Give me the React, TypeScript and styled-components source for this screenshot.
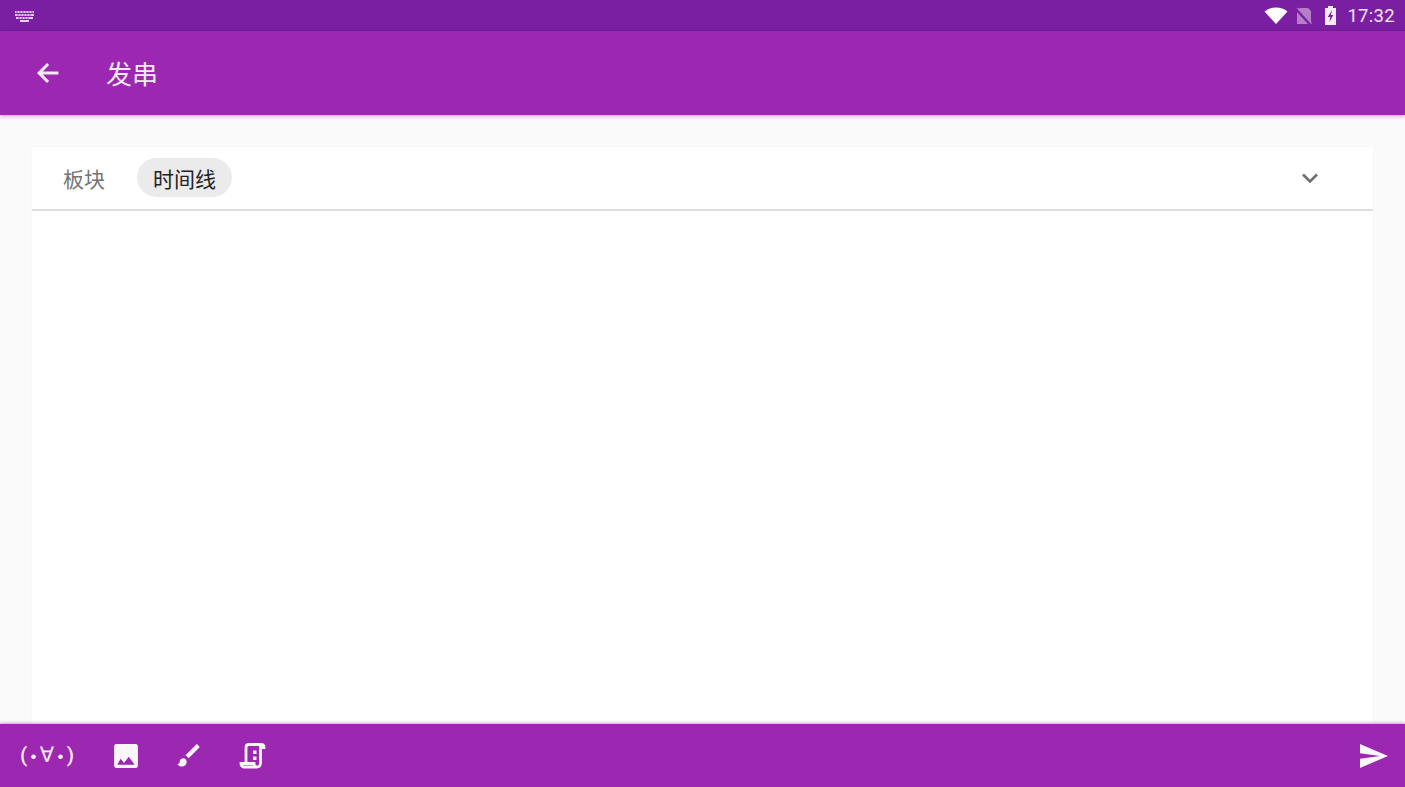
import React from "react";
import styled, { createGlobalStyle } from "styled-components";

const GlobalStyle = createGlobalStyle`
  html, body {
    margin: 0;
    padding: 0;
    background: #fafafa;
  }
  #root {
    height: 787px;
  }
  * {
    box-sizing: border-box;
  }
`;

const Page = styled.div`
  width: 1405px;
  height: 787px;
  display: flex;
  flex-direction: column;
  overflow: hidden;
  background: #fafafa;
  font-family: Roboto, "Noto Sans CJK SC", sans-serif;
`;

const StatusBar = styled.div`
  height: 31px;
  flex: none;
  display: flex;
  align-items: center;
  justify-content: space-between;
  padding: 0 10px 0 15px;
  background: #7b1fa2;
`;

const StatusIcons = styled.div`
  display: flex;
  align-items: center;
`;

const Clock = styled.span`
  margin-left: 10px;
  font-size: 18.5px;
  color: #f3e5f5;
  letter-spacing: 0.3px;
`;

const AppBar = styled.header`
  height: 84px;
  flex: none;
  display: flex;
  align-items: center;
  padding: 0 0 0 36px;
  background: #9c27b0;
  box-shadow: 0 1px 4px rgba(0, 0, 0, 0.32);
  position: relative;
  z-index: 1;
`;

const Title = styled.h1`
  margin: 0 0 2px 46px;
  font-size: 26px;
  font-weight: 400;
  color: #f6e9f8;
  font-family: "Noto Sans CJK SC", sans-serif;
`;

const Content = styled.main`
  flex: 1;
  min-height: 0;
  display: flex;
  padding: 32px 32px 0;
`;

const Card = styled.section`
  flex: 1;
  display: flex;
  flex-direction: column;
  background: #fff;
  box-shadow: 0 0 2px rgba(0, 0, 0, 0.03);
`;

const BoardRow = styled.div`
  height: 64px;
  flex: none;
  display: flex;
  align-items: center;
  padding: 0 54px 1px 31px;
  border-bottom: 2px solid #dedede;
`;

const BoardLabel = styled.span`
  font-size: 21px;
  color: #757575;
  font-family: "Noto Sans CJK SC", sans-serif;
`;

const Chip = styled.span`
  height: 39px;
  margin-left: 32px;
  padding: 0 16px;
  display: flex;
  align-items: center;
  border-radius: 20px;
  background: #ebebeb;
  font-size: 21px;
  color: #222;
  font-family: "Noto Sans CJK SC", sans-serif;
`;

const Chevron = styled.svg`
  margin-left: auto;
`;

const BottomBar = styled.footer`
  height: 63px;
  flex: none;
  display: flex;
  align-items: center;
  padding: 0 16px 0 20px;
  background: #9c27b0;
  box-shadow: 0 -1px 3px rgba(0, 0, 0, 0.3);
  position: relative;
`;

const Kaomoji = styled.span`
  width: 55px;
  font-size: 21px;
  font-weight: 500;
  line-height: 1;
  white-space: nowrap;
  color: #f8eefa;
  font-family: Roboto, "DejaVu Sans", sans-serif;
  letter-spacing: 3.3px;
`;

const KaomojiDot = styled.span`
  font-size: 17px;
  font-family: "Liberation Sans", sans-serif;
`;

const ToolIcon = styled.svg`
  flex: none;
  margin-left: ${(p: { $gap: number }) => p.$gap}px;
`;

const SendIcon = styled.svg`
  margin-left: auto;
`;

export default function App() {
  return (
    <Page>
      <GlobalStyle />
      <StatusBar>
        <svg width="19" height="12" viewBox="0 0 19 12" fill="#e6cfee">
          <path d="M0 1h19v2H0zM0 4h19v2H0zM1 7h17v2H1zM5 10h9v2H5z" />
          <path
            d="M2 1v2M5 1v2M8 1v2M11 1v2M14 1v2M17 1v2M3 4v2M6 4v2M9 4v2M12 4v2M15 4v2M4 7v2M7 7v2M10 7v2M13 7v2"
            stroke="#7b1fa2"
            strokeWidth="0.8"
          />
        </svg>
        <StatusIcons>
          <svg width="24" height="17" viewBox="0 0 24 17" fill="#fff">
            <path d="M0.5 4.5C3.5 2 7.500 0.5 12 0.5s8.500 1.500 11.500 4L12 17z" />
          </svg>
          <svg width="16" height="18" viewBox="0 0 16 18" fill="#b57fc8" style={{ marginLeft: 8 }}>
            <path d="M4 1h8l3 3v12.500L3 2.500zM1 1.500l1-1 14 15.500-1 1zM1 5l11 12H1z" />
          </svg>
          <svg width="13" height="19" viewBox="0 0 13 19" style={{ marginLeft: 12 }}>
            <path d="M4 0h5v2h3v17H1V2h3z" fill="#f5ecf8" />
            <path d="M8 4L3.800 11h2.500L5.500 16 9.300 9H6.800z" fill="#7b1fa2" />
          </svg>
          <Clock>17:32</Clock>
        </StatusIcons>
      </StatusBar>
      <AppBar>
        <svg width="24" height="24" viewBox="0 0 24 24" fill="#f6e9f8">
          <path d="M22.500 10.500H6.800l6.300-6.400L11 2 1 12l10 10 2.100-2.100-6.300-6.400h15.700z" />
        </svg>
        <Title>发串</Title>
      </AppBar>
      <Content>
        <Card>
          <BoardRow>
            <BoardLabel>板块</BoardLabel>
            <Chip>时间线</Chip>
            <Chevron width="18" height="12" viewBox="0 0 18 12" fill="none" stroke="#707070" strokeWidth="2.600">
              <path d="M2 2.500l7 7 7-7" />
            </Chevron>
          </BoardRow>
        </Card>
      </Content>
      <BottomBar>
        <Kaomoji>
          (<KaomojiDot>•</KaomojiDot>∀<KaomojiDot>•</KaomojiDot>)
        </Kaomoji>
        <ToolIcon $gap={38} width="26" height="26" viewBox="0 0 24 24" fill="#fbf5fc">
          <path d="M23 21V3c0-1.100-.9-2-2-2H3C1.900 1 1 1.900 1 3v18c0 1.100.9 2 2 2h18c1.100 0 2-.9 2-2zM7 14.500l3.200 4 4.300-5.800 5.500 7.300H4z" />
        </ToolIcon>
        <ToolIcon $gap={36} width="28" height="28" viewBox="0 0 24 24" fill="#fbf5fc">
          <path d="M7 14c-1.700 0-3 1.300-3 3 0 1.300-1.200 2-2 2 .9 1.200 2.500 2 4 2 2.200 0 4-1.800 4-4 0-1.700-1.300-3-3-3zM20.700 3.600l-1.300-1.300c-.4-.4-1-.4-1.400 0L9 11.300 11.700 14l9-9c.4-.4.4-1 0-1.400z" />
        </ToolIcon>
        <ToolIcon $gap={36} width="28" height="28" viewBox="0 0 28 28" fill="none" stroke="#fbf5fc" strokeWidth="2.800">
          <path d="M22 2.500H10C8 2.500 7 3.500 7 5.500V20M22 2.500c2 0 3 1 3 3H21.500V21c0 2.500-1.500 4-4 4H5c-2 0-3-1.500-3-3.500h13c0 2 1 3.500 2.500 3.500" />
          <path d="M14 8.500h3.500v3.500H14zM14 14.500h3.500v3.500H14z" fill="#fbf5fc" strokeWidth="0" />
        </ToolIcon>
        <SendIcon width="30" height="26" viewBox="0 0 30 26" fill="#fbf5fc">
          <path d="M1 1l28 12L1 25v-9.300L21 13 1 10.300z" />
        </SendIcon>
      </BottomBar>
    </Page>
  );
}
